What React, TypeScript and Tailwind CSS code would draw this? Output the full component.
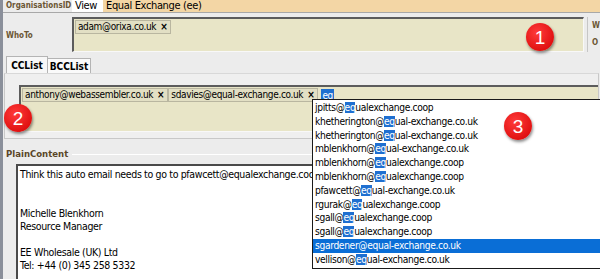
import React from "react";

const suggestions = [
  ["jpitts@", "eq", "ualexchange.coop"],
  ["khetherington@", "eq", "ual-exchange.co.uk"],
  ["khetherington@", "eq", "ual-exchange.co.uk"],
  ["mblenkhorn@", "eq", "ual-exchange.co.uk"],
  ["mblenkhorn@", "eq", "ualexchange.coop"],
  ["mblenkhorn@", "eq", "ualexchange.coop"],
  ["pfawcett@", "eq", "ual-exchange.co.uk"],
  ["rgurak@", "eq", "ualexchange.coop"],
  ["sgall@", "eq", "ualexchange.coop"],
  ["sgall@", "eq", "ualexchange.coop"],
  ["sgardener@", "eq", "ual-exchange.co.uk"],
  ["vellison@", "eq", "ual-exchange.co.uk"],
];

const selectedIndex = 10;

function Badge({ n, className }: { n: string; className: string }) {
  return (
    <div
      className={`absolute flex h-[28px] w-[28px] items-center justify-center rounded-full bg-[radial-gradient(circle_at_40%_35%,#ff3b3b,#d40000)] font-['Liberation_Sans',sans-serif] text-[19px] leading-none tracking-normal text-white shadow-[1px_2px_3px_rgba(0,0,0,0.45)] ${className}`}
    >
      {n}
    </div>
  );
}

function Chip({ label }: { label: string }) {
  return (
    <div className="flex h-[14px] items-center gap-[4px] border border-[#b9b6a0] bg-[#e2dfc4] pl-[2px] pr-[3px] leading-none text-black">
      <span>{label}</span>
      <span className="text-[10px] font-bold">×</span>
    </div>
  );
}

function Label({ children }: { children: React.ReactNode }) {
  return (
    <span className="font-['DejaVu_Sans_Condensed','DejaVu_Sans',sans-serif] text-[8px] font-bold tracking-normal text-[#6b5634]">
      {children}
    </span>
  );
}

export default function App() {
  return (
    <div className="relative h-[279px] w-[600px] overflow-hidden border-l-[3px] border-[#8a8f9a] bg-[#ececec] font-['DejaVu_Sans_Condensed',Tahoma,sans-serif] text-[10px] tracking-[-0.35px] text-black">
      {/* organisation row */}
      <div className="flex h-[13px] border-b border-[#a8a8a8]">
        <div className="flex w-[69px] items-center pl-[3px]">
          <Label>OrganisationsID</Label>
        </div>
        <div className="flex w-[31px] items-center bg-white pl-[3px] text-[11px]">
          View
        </div>
        <div className="flex flex-1 items-center bg-[#f3d6a5] pl-[3px] text-[11px]">
          Equal Exchange (ee)
        </div>
      </div>

      {/* who to */}
      <div className="flex h-[43px] items-start pt-[4px]">
        <div className="flex h-[35px] w-[69px] items-center pl-[3px] pt-[2px]">
          <Label>WhoTo</Label>
        </div>
        <div className="h-[35px] w-[513px] border-l-2 border-t-2 border-[#5c5c5c] border-b border-r border-b-[#f8f8f8] border-r-[#f8f8f8] bg-[#e8e5c7] pl-[1px] pt-[1px]">
          <div className="flex">
            <Chip label="adam@orixa.co.uk" />
          </div>
        </div>
        <div className="ml-[3px] flex h-[35px] flex-col justify-around border-l border-[#c6c6c6] pl-[4px]">
          <Label>W</Label>
          <Label>O</Label>
        </div>
      </div>

      {/* tabs */}
      <div className="flex h-[17px] items-end pl-[3px]">
        <div className="flex h-[17px] w-[42px] items-center justify-center border border-b-0 border-[#b4b4b4] bg-[#f7f7f7] font-['DejaVu_Sans_Condensed','DejaVu_Sans',sans-serif] text-[10px] font-bold tracking-normal">
          CCList
        </div>
        <div className="flex h-[15px] w-[43px] items-center justify-center border border-b-0 border-l-0 border-[#b4b4b4] bg-[#fafafa] font-['DejaVu_Sans_Condensed','DejaVu_Sans',sans-serif] text-[10px] font-bold tracking-normal">
          BCCList
        </div>
      </div>

      {/* tab panel */}
      <div className="mx-[1px] h-[66px] border border-[#c8c8c8] border-t-[#d8d8d8] bg-[#efefef] pl-[14px] pt-[11px]">
        <div className="h-[47px] border-l-2 border-t-2 border-[#5c5c5c] border-b border-b-[#f8f8f8] bg-[#e8e5c7] pl-[1px] pt-[1px]">
          <div className="flex items-center">
            <Chip label="anthony@webassembler.co.uk" />
            <Chip label="sdavies@equal-exchange.co.uk" />
            <span className="ml-[3px] bg-[#1f6fd0] px-[1px] leading-[13px] text-white">
              eq
            </span>
          </div>
        </div>
      </div>

      {/* plain content */}
      <div className="mt-[8px] flex items-center gap-[4px] pl-[3px]">
        <span className="font-['DejaVu_Sans_Condensed','DejaVu_Sans',sans-serif] text-[9.5px] font-bold tracking-normal text-[#5a4628]">
          PlainContent
        </span>
        <div className="h-[1px] flex-1 border-b border-[#ffffff] bg-[#c4c4c4]" />
      </div>
      <div className="ml-[13px] mt-[3px] h-[120px] border-l-2 border-t-2 border-[#4a4a4a] bg-white pl-[2px] pt-[2px] text-[10.5px] leading-[13px]">
        <p>Think this auto email needs to go to pfawcett@equalexchange.coop</p>
        <p>&nbsp;</p>
        <p>&nbsp;</p>
        <p>Michelle Blenkhorn</p>
        <p>Resource Manager</p>
        <p>&nbsp;</p>
        <p>EE Wholesale (UK) Ltd</p>
        <p>Tel: +44 (0) 345 258 5332</p>
      </div>

      {/* autocomplete dropdown */}
      <div className="absolute left-[309px] top-[99px] w-[291px] border border-[#1a1a1a] bg-white py-[1px] text-[10.2px]">
        {suggestions.map(([pre, hit, post], i) => (
          <div
            key={i}
            className={`h-[13.8px] pl-[2px] leading-[14px] ${i === selectedIndex ? "bg-[#0a6ed6] text-white" : ""}`}
          >
            {pre}
            <span className={i === selectedIndex ? "" : "bg-[#1f6fd0] text-white"}>{hit}</span>
            {post}
          </div>
        ))}
      </div>

      <Badge n="1" className="left-[523px] top-[23px]" />
      <Badge n="2" className="left-[1px] top-[104px]" />
      <Badge n="3" className="left-[501px] top-[112px]" />
    </div>
  );
}
